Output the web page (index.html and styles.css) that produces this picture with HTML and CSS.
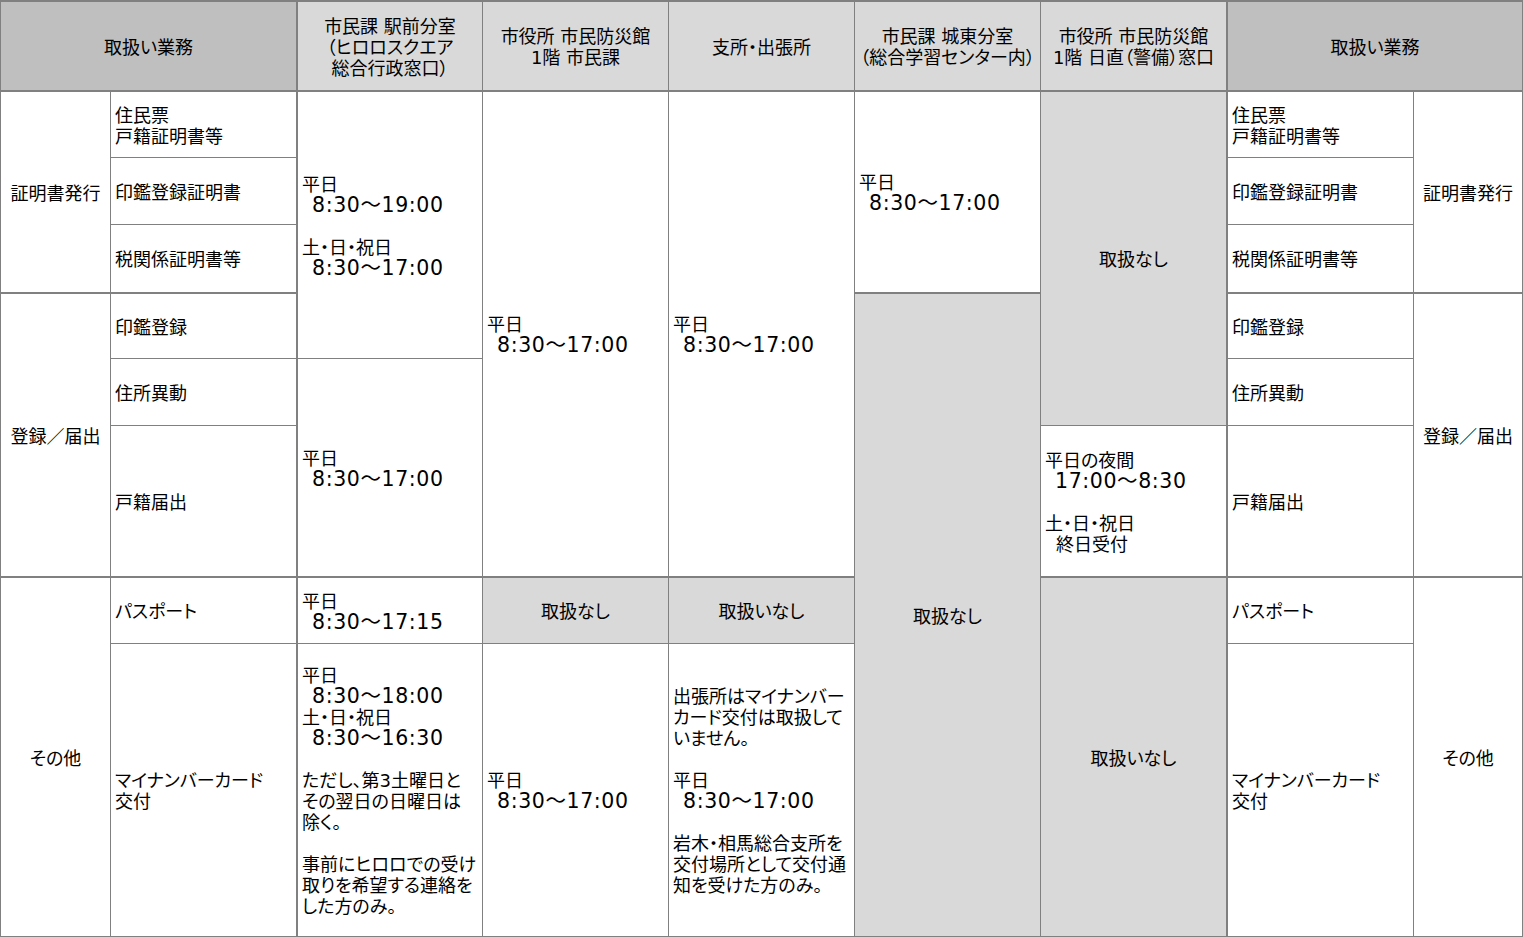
FILE: index.html
```html
<!DOCTYPE html>
<html lang="ja">
<head>
<meta charset="utf-8">
<title>取扱い業務と受付時間</title>
<link rel="stylesheet" href="styles.css">
</head>
<body>
<div class="sheet">
  <!-- header -->
  <div class="c ctr head-main cs2 tr tb"><p>取扱い業務</p></div>
  <div class="c ctr head tb"><p>市民課 駅前分室</p><p>（ヒロロスクエア</p><p>総合行政窓口）</p></div>
  <div class="c ctr head tb"><p>市役所 市民防災館</p><p>1階 市民課</p></div>
  <div class="c ctr head tb"><p>支所・出張所</p></div>
  <div class="c ctr head tb"><p>市民課 城東分室</p><p>（総合学習センター内）</p></div>
  <div class="c ctr head tb tr"><p>市役所 市民防災館</p><p>1階 日直（警備）窓口</p></div>
  <div class="c ctr head-main cs2 tb"><p>取扱い業務</p></div>

  <!-- row 1 -->
  <div class="c ctr rs3 tb"><p>証明書発行</p></div>
  <div class="c tr"><p>住民票</p><p>戸籍証明書等</p></div>
  <div class="c rs4"><p>平日</p><p class="t">8:30～19:00</p><p class="gap">土・日・祝日</p><p class="t">8:30～17:00</p></div>
  <div class="c rs6 tb"><p>平日</p><p class="t">8:30～17:00</p></div>
  <div class="c rs6 tb"><p>平日</p><p class="t">8:30～17:00</p></div>
  <div class="c rs3 tb"><p>平日</p><p class="t">8:30～17:00</p></div>
  <div class="c ctr na rs5 tr"><p>取扱なし</p></div>
  <div class="c"><p>住民票</p><p>戸籍証明書等</p></div>
  <div class="c ctr rs3 tb"><p>証明書発行</p></div>

  <!-- row 2 -->
  <div class="c tr"><p>印鑑登録証明書</p></div>
  <div class="c"><p>印鑑登録証明書</p></div>

  <!-- row 3 -->
  <div class="c tr tb"><p>税関係証明書等</p></div>
  <div class="c tb"><p>税関係証明書等</p></div>

  <!-- row 4 -->
  <div class="c ctr rs3 tb"><p>登録／届出</p></div>
  <div class="c tr"><p>印鑑登録</p></div>
  <div class="c ctr na rs5"><p>取扱なし</p></div>
  <div class="c"><p>印鑑登録</p></div>
  <div class="c ctr rs3 tb"><p>登録／届出</p></div>

  <!-- row 5 -->
  <div class="c tr"><p>住所異動</p></div>
  <div class="c rs2 tb"><p>平日</p><p class="t">8:30～17:00</p></div>
  <div class="c"><p>住所異動</p></div>

  <!-- row 6 -->
  <div class="c tr tb"><p>戸籍届出</p></div>
  <div class="c tr tb"><p>平日の夜間</p><p class="t">17:00～8:30</p><p class="gap">土・日・祝日</p><p class="ind">終日受付</p></div>
  <div class="c tb"><p>戸籍届出</p></div>

  <!-- row 7 -->
  <div class="c ctr rs2"><p>その他</p></div>
  <div class="c tr"><p>パスポート</p></div>
  <div class="c"><p>平日</p><p class="t">8:30～17:15</p></div>
  <div class="c ctr na"><p>取扱なし</p></div>
  <div class="c ctr na"><p>取扱いなし</p></div>
  <div class="c ctr na rs2 tr"><p>取扱いなし</p></div>
  <div class="c"><p>パスポート</p></div>
  <div class="c ctr rs2"><p>その他</p></div>

  <!-- row 8 -->
  <div class="c tr"><p>マイナンバーカード</p><p>交付</p></div>
  <div class="c"><p>平日</p><p class="t">8:30～18:00</p><p>土・日・祝日</p><p class="t">8:30～16:30</p><p class="gap">ただし、第3土曜日と</p><p>その翌日の日曜日は</p><p>除く。</p><p class="gap">事前にヒロロでの受け</p><p>取りを希望する連絡を</p><p>した方のみ。</p></div>
  <div class="c"><p>平日</p><p class="t">8:30～17:00</p></div>
  <div class="c"><p>出張所はマイナンバー</p><p>カード交付は取扱して</p><p>いません。</p><p class="gap">平日</p><p class="t">8:30～17:00</p><p class="gap">岩木・相馬総合支所を</p><p>交付場所として交付通</p><p>知を受けた方のみ。</p></div>
  <div class="c"><p>マイナンバーカード</p><p>交付</p></div>
</div>
</body>
</html>
```

FILE: styles.css
```css
html, body {
  margin: 0;
  padding: 0;
  background: #ffffff;
}

body {
  font-family: "DejaVu Sans", "Noto Sans CJK JP", sans-serif;
  font-size: 18px;
  line-height: 21px;
  color: #000000;
  font-feature-settings: "palt" 1;
}

.sheet {
  display: grid;
  grid-template-columns: 110px 187px 185px 186px 186px 186px 187px 186px 109px;
  grid-template-rows: 90px 66px 67px 69px 65px 67px 152px 66px 293px;
  width: max-content;
  border-left: 1px solid #808080;
  border-top: 2px solid #808080;
}

.c {
  box-sizing: border-box;
  display: flex;
  flex-direction: column;
  justify-content: center;
  padding: 2px 0 0 4px;
  border-right: 1px solid #808080;
  border-bottom: 1px solid #808080;
  background: #ffffff;
  overflow: hidden;
}

.c p {
  margin: 0;
  height: 21px;
  white-space: nowrap;
}

.ctr {
  align-items: center;
  text-align: center;
  padding: 2px 0 0 0;
}

.head {
  background: #d9d9d9;
}

.head-main {
  background: #bfbfbf;
}

.na {
  background: #d9d9d9;
}

.tr {
  border-right-width: 2px;
}

.tb {
  border-bottom-width: 2px;
}

.cs2 { grid-column: span 2; }
.rs2 { grid-row: span 2; }
.rs3 { grid-row: span 3; }
.rs4 { grid-row: span 4; }
.rs5 { grid-row: span 5; }
.rs6 { grid-row: span 6; }

.c .gap {
  margin-top: 21px;
}

.c .t {
  font-size: 20.5px;
  letter-spacing: 0.6px;
  padding-left: 10px;
}

.c .ind {
  padding-left: 11px;
}
```
